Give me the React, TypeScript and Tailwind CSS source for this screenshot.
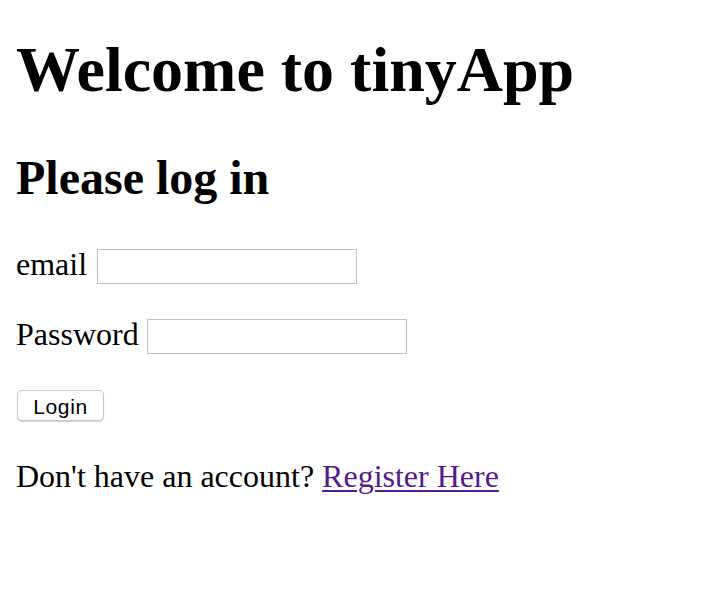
export default function App() {
    return (
        <div className="min-h-screen bg-white text-black px-4 font-['Liberation_Serif','Times_New_Roman',serif]">
            {/* Header */}
            <h1 className="pt-[38px] text-[64px] leading-none font-bold whitespace-nowrap">
                Welcome to tinyApp
            </h1>
            <h2 className="mt-[52px] text-[48px] leading-none font-bold whitespace-nowrap">
                Please log in
            </h2>

            {/* Login form */}
            <form className="flex flex-col items-start">
                <div className="mt-[47px] flex items-start gap-[10px] h-[35px]">
                    <label htmlFor="email" className="-mt-[1px] text-[32px] leading-none">
                        email
                    </label>
                    <input
                        type="text"
                        id="email"
                        className="w-[260px] h-[35px] border border-[#bfbfbf] bg-white outline-none"
                    />
                </div>

                <div className="mt-[35px] flex items-start gap-[8px] h-[35px]">
                    <label htmlFor="password" className="-mt-[1px] text-[32px] leading-none">
                        Password
                    </label>
                    <input
                        type="password"
                        id="password"
                        className="w-[260px] h-[35px] border border-[#bfbfbf] bg-white outline-none"
                    />
                </div>

                <button
                    type="submit"
                    className="mt-[36px] ml-[1px] w-[87px] h-[31px] pt-[2px] rounded-[5px] border border-[#c8c8c8] bg-white shadow-[0_1px_1px_rgba(0,0,0,0.18)] text-[21px] tracking-[0.6px] leading-none font-['Liberation_Sans',Arial,sans-serif]"
                >
                    Login
                </button>
            </form>

            <p className="mt-[39px] text-[32px] leading-none whitespace-nowrap">
                Don't have an account?{" "}
                <a href="#" className="text-[#551a8b] underline decoration-[2px] underline-offset-[3px]">
                    Register Here
                </a>
            </p>
        </div>
    )
}
